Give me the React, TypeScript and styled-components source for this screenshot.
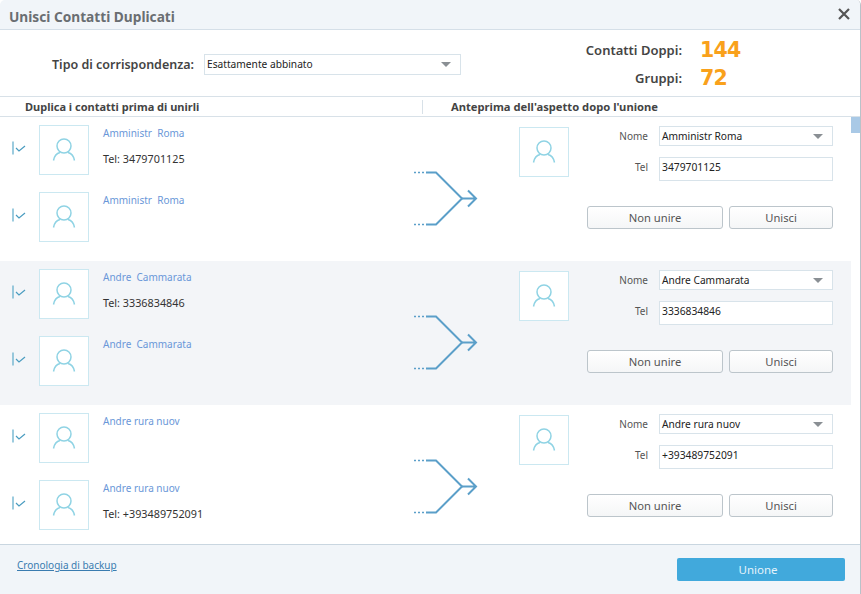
import styled, {createGlobalStyle} from "styled-components";

const GlobalStyle = createGlobalStyle`
  html, body {
    margin: 0;
    padding: 0;
    background: #fff;
  }
  body {
    font-family: "Noto Sans", "DejaVu Sans", sans-serif;
    font-size: 11px;
    color: #333;
  }
`;

const Dialog = styled.div`
  width: 861px;
  height: 594px;
  box-sizing: border-box;
  display: flex;
  flex-direction: column;
  overflow: hidden;
  background: #fff;
  border-right: 1px solid #b9c2c9;
  border-radius: 5px 5px 0 0;
`;

const TitleBar = styled.div`
  height: 30px;
  flex: none;
  box-sizing: border-box;
  display: flex;
  align-items: center;
  justify-content: space-between;
  padding: 0 10px 0 9px;
  background: #f1f5f9;
  border-bottom: 1px solid #d5dfe8;
`;

const Title = styled.div`
  font-size: 13.7px;
  font-weight: 700;
  color: #6a6e72;
  margin-top: 3px;
`;

const CloseIcon = styled.svg`
  width: 12px;
  height: 12px;
  margin-top: -1px;
`;

const TopArea = styled.div`
  height: 66px;
  flex: none;
  box-sizing: border-box;
  display: flex;
  align-items: center;
  padding: 2px 0 0 52px;
`;

const TypeLabel = styled.div`
  font-size: 12.5px;
  font-weight: 600;
  color: #444;
  width: 152px;
`;

const Select = styled.div<{$width: number; $height: number}>`
  width: ${props => props.$width}px;
  height: ${props => props.$height}px;
  box-sizing: border-box;
  display: flex;
  align-items: center;
  justify-content: space-between;
  padding: 0 9px 0 2px;
  background: #fff;
  border: 1px solid #d8e3ea;
  font-size: 10.2px;
  color: #222;
`;

const Caret = styled.span`
  width: 0;
  height: 0;
  border-left: 5px solid transparent;
  border-right: 5px solid transparent;
  border-top: 5px solid #8a8f94;
`;

const Stats = styled.div`
  margin-left: 121px;
  display: grid;
  grid-template-columns: 100px auto;
  column-gap: 18px;
  row-gap: 2px;
  align-items: center;
`;

const StatLabel = styled.div`
  font-size: 13px;
  font-weight: 600;
  color: #444;
  text-align: right;
  white-space: nowrap;
`;

const StatValue = styled.div`
  font-family: "DejaVu Sans", sans-serif;
  font-size: 20.5px;
  letter-spacing: -0.8px;
  line-height: 26px;
  font-weight: 700;
  color: #f9a11b;
`;

const ColumnHeads = styled.div`
  height: 21px;
  flex: none;
  box-sizing: border-box;
  display: flex;
  align-items: center;
  border-top: 1px solid #d8e1e8;
  border-bottom: 1px solid #d8e1e8;
  font-size: 11px;
  font-weight: 700;
  color: #444;
`;

const HeadLeft = styled.div`
  width: 423px;
  height: 14px;
  line-height: 14px;
  box-sizing: border-box;
  padding-left: 25px;
  border-right: 1px solid #d8e1e8;
`;

const HeadRight = styled.div`
  padding-left: 28px;
  font-size: 11.2px;
`;

const ListArea = styled.div`
  flex: 1;
  min-height: 0;
  display: flex;
  overflow: hidden;
`;

const Groups = styled.div`
  width: 851px;
  flex: none;
`;

const ScrollTrack = styled.div`
  flex: 1;
  background: #fff;
`;

const ScrollThumb = styled.div`
  height: 16px;
  background: #a9c9e6;
`;

const Group = styled.div<{$shaded?: boolean}>`
  height: 144px;
  display: flex;
  background: ${props => (props.$shaded ? "#f3f5f8" : "#fff")};
`;

const Contacts = styled.div`
  width: 414px;
  flex: none;
  display: flex;
  flex-direction: column;
  gap: 17px;
  padding-top: 8px;
`;

const ContactRow = styled.div`
  height: 50px;
  display: flex;
  align-items: flex-start;
`;

const CheckIcon = styled.svg`
  width: 14px;
  height: 14px;
  flex: none;
  margin: 16px 13px 0 12px;
`;

const Avatar = styled.div`
  width: 50px;
  height: 50px;
  flex: none;
  box-sizing: border-box;
  display: flex;
  align-items: center;
  justify-content: center;
  background: #fff;
  border: 1px solid #cbe8f1;
`;

const ContactInfo = styled.div`
  margin-left: 14px;
  display: flex;
  flex-direction: column;
`;

const ContactName = styled.div`
  height: 16px;
  line-height: 16px;
  font-size: 10px;
  color: #6a97d8;
  white-space: pre;
`;

const ContactTel = styled.div`
  margin-top: 10px;
  line-height: 16px;
  font-size: 10.8px;
  color: #333;
`;

const MergeArrow = styled.svg`
  width: 66px;
  height: 60px;
  flex: none;
  margin-top: 49px;
`;

const Preview = styled.div`
  margin-left: 39px;
  padding-top: 10px;
  display: flex;
`;

const Fields = styled.div`
  width: 246px;
  margin: -1px 0 0 18px;
  display: flex;
  flex-direction: column;
`;

const FieldRow = styled.div<{$gap: number}>`
  display: flex;
  justify-content: flex-end;
  align-items: flex-start;
  gap: 11px;
  margin-bottom: ${props => props.$gap}px;
`;

const FieldLabel = styled.div`
  line-height: 21px;
  font-size: 10px;
  color: #555;
`;

const TextField = styled.div`
  width: 174px;
  height: 24px;
  box-sizing: border-box;
  padding: 0 2px;
  line-height: 19px;
  background: #fff;
  border: 1px solid #d8e3ea;
  font-size: 10.3px;
  color: #222;
`;

const Actions = styled.div`
  display: flex;
  justify-content: flex-end;
  gap: 6px;
`;

const ActionButton = styled.button<{$width: number}>`
  width: ${props => props.$width}px;
  height: 23px;
  padding: 0;
  font-family: inherit;
  font-size: 11.2px;
  color: #555;
  background: linear-gradient(#fff, #f5f6f7);
  border: 1px solid #bcc5cb;
  border-radius: 3px;
`;

const Footer = styled.div`
  height: 50px;
  flex: none;
  box-sizing: border-box;
  display: flex;
  justify-content: space-between;
  padding: 12px 15px 0 17px;
  background: #f1f5f9;
  border-top: 1px solid #c9d6e0;
`;

const BackupLink = styled.a`
  height: 16px;
  line-height: 16px;
  font-size: 10px;
  color: #3a7cb0;
  text-decoration: underline;
`;

const MergeButton = styled.button`
  width: 168px;
  height: 23px;
  margin-top: 1px;
  padding: 0 6px 0 0;
  font-family: inherit;
  font-size: 11.5px;
  color: #e4f3fb;
  background: #41a9dc;
  border: none;
  border-radius: 2px;
`;

function PersonIcon() {
    return <svg width="24" height="24" viewBox="0 0 24 24" fill="none" stroke="#8fd3e4" strokeWidth="1.5">
        <circle cx="12" cy="8" r="7"/>
        <path d="M1.500 22.500c.8-4.500 3.200-7.200 6.500-8M22.500 22.500c-.8-4.500-3.200-7.200-6.500-8"/>
    </svg>;
}

function Check() {
    return <CheckIcon viewBox="0 0 14 14" fill="none">
        <path d="M1 .5v13" stroke="#5aa9c9" strokeWidth="1.2"/>
        <path d="M4 7l3 3 6-5" stroke="#4a9cc0" strokeWidth="1.2"/>
    </CheckIcon>;
}

function Arrow() {
    return <MergeArrow viewBox="0 0 66 60" fill="none" stroke="#5b9fc9">
        <path d="M0 6.500h11" strokeWidth="1.500" strokeDasharray="2 2"/>
        <path d="M0 58.500h11" strokeWidth="1.500" strokeDasharray="2 2"/>
        <path d="M12 6.500h10l26 26-26 26h-10" strokeWidth="2"/>
        <path d="M47 32.500h15M54 24.500l8 8-8 8" strokeWidth="2"/>
    </MergeArrow>;
}

interface Contact {
    name: string;
    tel?: string;
}

interface MergeGroup {
    contacts: Contact[];
    name: string;
    tel: string;
}

const groups: MergeGroup[] = [
    {
        contacts: [{name: "Amministr  Roma", tel: "3479701125"}, {name: "Amministr  Roma"}],
        name: "Amministr Roma",
        tel: "3479701125",
    },
    {
        contacts: [{name: "Andre  Cammarata", tel: "3336834846"}, {name: "Andre  Cammarata"}],
        name: "Andre Cammarata",
        tel: "3336834846",
    },
    {
        contacts: [{name: "Andre rura nuov"}, {name: "Andre rura nuov", tel: "+393489752091"}],
        name: "Andre rura nuov",
        tel: "+393489752091",
    },
];

function App() {
    return <Dialog>
        <GlobalStyle/>
        <TitleBar>
            <Title>Unisci Contatti Duplicati</Title>
            <CloseIcon viewBox="0 0 12 12" stroke="#555" strokeWidth="2.200">
                <path d="M1 1l10 10M11 1L1 11"/>
            </CloseIcon>
        </TitleBar>
        <TopArea>
            <TypeLabel>Tipo di corrispondenza:</TypeLabel>
            <Select $width={257} $height={21}>
                Esattamente abbinato
                <Caret/>
            </Select>
            <Stats>
                <StatLabel>Contatti Doppi:</StatLabel>
                <StatValue>144</StatValue>
                <StatLabel>Gruppi:</StatLabel>
                <StatValue>72</StatValue>
            </Stats>
        </TopArea>
        <ColumnHeads>
            <HeadLeft>Duplica i contatti prima di unirli</HeadLeft>
            <HeadRight>Anteprima dell'aspetto dopo l'unione</HeadRight>
        </ColumnHeads>
        <ListArea>
            <Groups>
                {groups.map((group, index) => (
                    <Group key={group.name} $shaded={index === 1}>
                        <Contacts>
                            {group.contacts.map((contact, i) => (
                                <ContactRow key={i}>
                                    <Check/>
                                    <Avatar><PersonIcon/></Avatar>
                                    <ContactInfo>
                                        <ContactName>{contact.name}</ContactName>
                                        {contact.tel && <ContactTel>Tel: {contact.tel}</ContactTel>}
                                    </ContactInfo>
                                </ContactRow>
                            ))}
                        </Contacts>
                        <Arrow/>
                        <Preview>
                            <Avatar><PersonIcon/></Avatar>
                            <Fields>
                                <FieldRow $gap={10}>
                                    <FieldLabel>Nome</FieldLabel>
                                    <Select $width={174} $height={20}>
                                        {group.name}
                                        <Caret/>
                                    </Select>
                                </FieldRow>
                                <FieldRow $gap={25}>
                                    <FieldLabel>Tel</FieldLabel>
                                    <TextField>{group.tel}</TextField>
                                </FieldRow>
                                <Actions>
                                    <ActionButton $width={136}>Non unire</ActionButton>
                                    <ActionButton $width={104}>Unisci</ActionButton>
                                </Actions>
                            </Fields>
                        </Preview>
                    </Group>
                ))}
            </Groups>
            <ScrollTrack><ScrollThumb/></ScrollTrack>
        </ListArea>
        <Footer>
            <BackupLink>Cronologia di backup</BackupLink>
            <MergeButton>Unione</MergeButton>
        </Footer>
    </Dialog>;
}

export default App;
